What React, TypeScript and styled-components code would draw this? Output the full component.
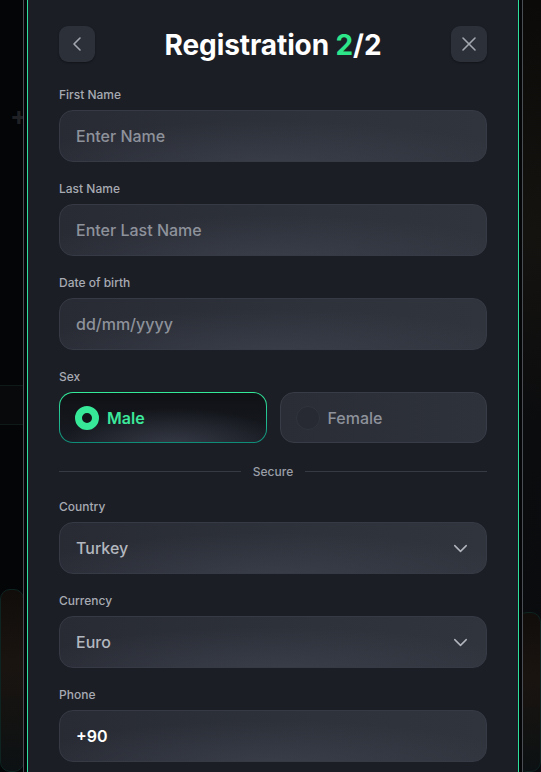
import { ChevronDown, ChevronLeft, X } from "lucide-react";
import styled, { createGlobalStyle } from "styled-components";

const GlobalStyle = createGlobalStyle`
  html, body {
    margin: 0;
    padding: 0;
    background: #050607;
    height: 100%;
    overflow: hidden;
  }
  * {
    box-sizing: border-box;
  }
`;

type FieldProps = {
  label: string;
  value: string;
  filled?: boolean;
  select?: boolean;
};

function Field({ label, value, filled, select }: FieldProps) {
  return (
    <FieldWrap>
      <Label>{label}</Label>
      <InputBox $select={select}>
        <InputText $filled={filled}>{value}</InputText>
        {select && <ChevronDown size={23} strokeWidth={1.5} color="#b3b6bd" />}
      </InputBox>
    </FieldWrap>
  );
}

export default function App() {
  return (
    <>
      <GlobalStyle />
      <Page>
        <Backdrop>
          <SideCol>
            <Plus>+</Plus>
            <SideBand />
            <GhostCard />
          </SideCol>
          <SideCol $right>
            <GhostCard $right />
          </SideCol>
        </Backdrop>

        <Frame>
          <Modal>
            <Header>
              <IconBtn aria-label="back">
                <ChevronLeft size={24} strokeWidth={1.6} />
              </IconBtn>
              <Title>
                Registration <Accent>2</Accent>/2
              </Title>
              <IconBtn aria-label="close">
                <X size={24} strokeWidth={1.6} />
              </IconBtn>
            </Header>

            <Form>
              <Field label="First Name" value="Enter Name" />
              <Field label="Last Name" value="Enter Last Name" />
              <Field label="Date of birth" value="dd/mm/yyyy" />

              <FieldWrap>
                <Label>Sex</Label>
                <SexRow>
                  <SexOption $active>
                    <Radio $active />
                    <SexText $active>Male</SexText>
                  </SexOption>
                  <SexOption>
                    <Radio />
                    <SexText>Female</SexText>
                  </SexOption>
                </SexRow>
              </FieldWrap>

              <Divider>
                <Line />
                <DividerText>Secure</DividerText>
                <Line />
              </Divider>

              <Field label="Country" value="Turkey" select filled />
              <Field label="Currency" value="Euro" select filled />
              <Field label="Phone" value="+90" filled />
            </Form>
          </Modal>
        </Frame>
      </Page>
    </>
  );
}

/* ─── Styled Components ─────────────────────────── */

const Page = styled.div`
  position: relative;
  width: 541px;
  height: 772px;
  overflow: hidden;
  background: #050607;
  font-family: Inter, "Noto Sans", sans-serif;
`;

const Backdrop = styled.div`
  position: absolute;
  inset: 0;
  display: flex;
  justify-content: space-between;
`;

const SideCol = styled.div<{ $right?: boolean }>`
  width: 24px;
  height: 100%;
  display: flex;
  flex-direction: column;
  background: ${({ $right }) =>
    $right
      ? "linear-gradient(180deg, #0b0a08 0%, #151310 30%, #0b0c0e 55%, #0a0b0e 100%)"
      : "#040506"};
`;

const Plus = styled.div`
  margin-top: 100px;
  margin-left: 10px;
  font-size: 26px;
  font-weight: 700;
  color: #1f2124;
`;

const SideBand = styled.div`
  margin-top: 254px;
  height: 44px;
  border-top: 1px solid #0d1a18;
  border-bottom: 1px solid #0d1a18;
  background: #07090a;
`;

const GhostCard = styled.div<{ $right?: boolean }>`
  margin-top: ${({ $right }) => ($right ? "612px" : "164px")};
  height: 200px;
  border-radius: 10px;
  border: 1px solid #0e2421;
  background: linear-gradient(180deg, #100d0b 0%, #1a1410 40%, #0c1113 100%);
`;

const Frame = styled.div`
  position: absolute;
  top: -20px;
  bottom: -20px;
  left: 23px;
  width: 500px;
  border-left: 1px solid #4b4e55;
  border-right: 1px solid #4b4e55;
  padding: 0 3px;
  background: #050607;
`;

const Modal = styled.div`
  height: 100%;
  background: #1b1e25;
  border-left: 1px solid #2ee0a0;
  border-right: 1px solid #2ee0a0;
  padding: 46px 31px 0;
`;

const Header = styled.div`
  display: flex;
  align-items: center;
  justify-content: space-between;
  height: 36px;
`;

const IconBtn = styled.button`
  width: 36px;
  height: 36px;
  border-radius: 9px;
  border: none;
  background: #2c3039;
  color: #a3a7af;
  display: flex;
  align-items: center;
  justify-content: center;
  padding: 0;
  box-shadow: 0 1px 2px rgba(0, 0, 0, 0.35);
`;

const Title = styled.h1`
  margin: 0;
  font-size: 28px;
  font-weight: 700;
  color: #ffffff;
  letter-spacing: -0.1px;
  transform: translateY(1px);
`;

const Accent = styled.span`
  color: #2ee68a;
`;

const Form = styled.div`
  display: flex;
  flex-direction: column;
  gap: 19px;
  margin-top: 25px;
`;

const FieldWrap = styled.div`
  display: flex;
  flex-direction: column;
  gap: 7px;
`;

const Label = styled.label`
  font-size: 12px;
  line-height: 16px;
  font-weight: 500;
  color: #a7aab2;
`;

const InputBox = styled.div<{ $select?: boolean }>`
  height: 52px;
  border-radius: 14px;
  border: 1px solid #363a44;
  background: radial-gradient(
      ellipse 60% 90% at 50% 110%,
      rgba(62, 66, 77, 0.75) 0%,
      rgba(62, 66, 77, 0) 100%
    ),
    linear-gradient(90deg, #282b34 0%, #2e323b 60%, #30343d 100%);
  display: flex;
  align-items: center;
  justify-content: space-between;
  padding: 0 ${({ $select }) => ($select ? "14px" : "24px")} 0 16px;
`;

const InputText = styled.span<{ $filled?: boolean }>`
  font-size: 16px;
  font-weight: 500;
  color: ${({ $filled }) => ($filled ? "#b3b7bf" : "#8e929b")};

  &:only-child {
    color: ${({ $filled }) => ($filled ? "#ffffff" : "#8e929b")};
    font-weight: ${({ $filled }) => ($filled ? 600 : 500)};
  }
`;

const SexRow = styled.div`
  display: grid;
  grid-template-columns: 1fr 1fr;
  gap: 13px;
`;

const SexOption = styled.div<{ $active?: boolean }>`
  height: 51px;
  border-radius: 14px;
  display: flex;
  align-items: center;
  gap: 8px;
  padding: 0 15px;
  border: ${({ $active }) => ($active ? "1.5px solid transparent" : "1px solid #383c46")};
  background: ${({ $active }) =>
    $active
      ? `radial-gradient(ellipse 55% 80% at 55% 110%, rgba(58, 62, 74, 0.9) 0%, rgba(58, 62, 74, 0) 100%) padding-box,
         linear-gradient(180deg, #0f1115 0%, #181b22 100%) padding-box,
         linear-gradient(180deg, #34eb9a 0%, #1fb58f 60%, #0f8c78 100%) border-box`
      : "linear-gradient(90deg, #2a2d36 0%, #2e323b 100%)"};
`;

const Radio = styled.span<{ $active?: boolean }>`
  width: 24px;
  height: 24px;
  border-radius: 50%;
  flex-shrink: 0;
  ${({ $active }) =>
    $active
      ? `background: #111418; border: 7px solid #37e899;`
      : `background: #272a32; border: 1px solid #30343d;`}
`;

const SexText = styled.span<{ $active?: boolean }>`
  font-size: 16px;
  font-weight: ${({ $active }) => ($active ? 600 : 500)};
  color: ${({ $active }) => ($active ? "#3ce89c" : "#8e929b")};
`;

const Divider = styled.div`
  display: flex;
  align-items: center;
  gap: 12px;
  height: 16px;
  margin-top: 1px;
  margin-bottom: 1px;
`;

const Line = styled.div`
  flex: 1;
  height: 1px;
  background: #363a43;
`;

const DividerText = styled.span`
  font-size: 12px;
  font-weight: 500;
  color: #9a9ea7;
`;
